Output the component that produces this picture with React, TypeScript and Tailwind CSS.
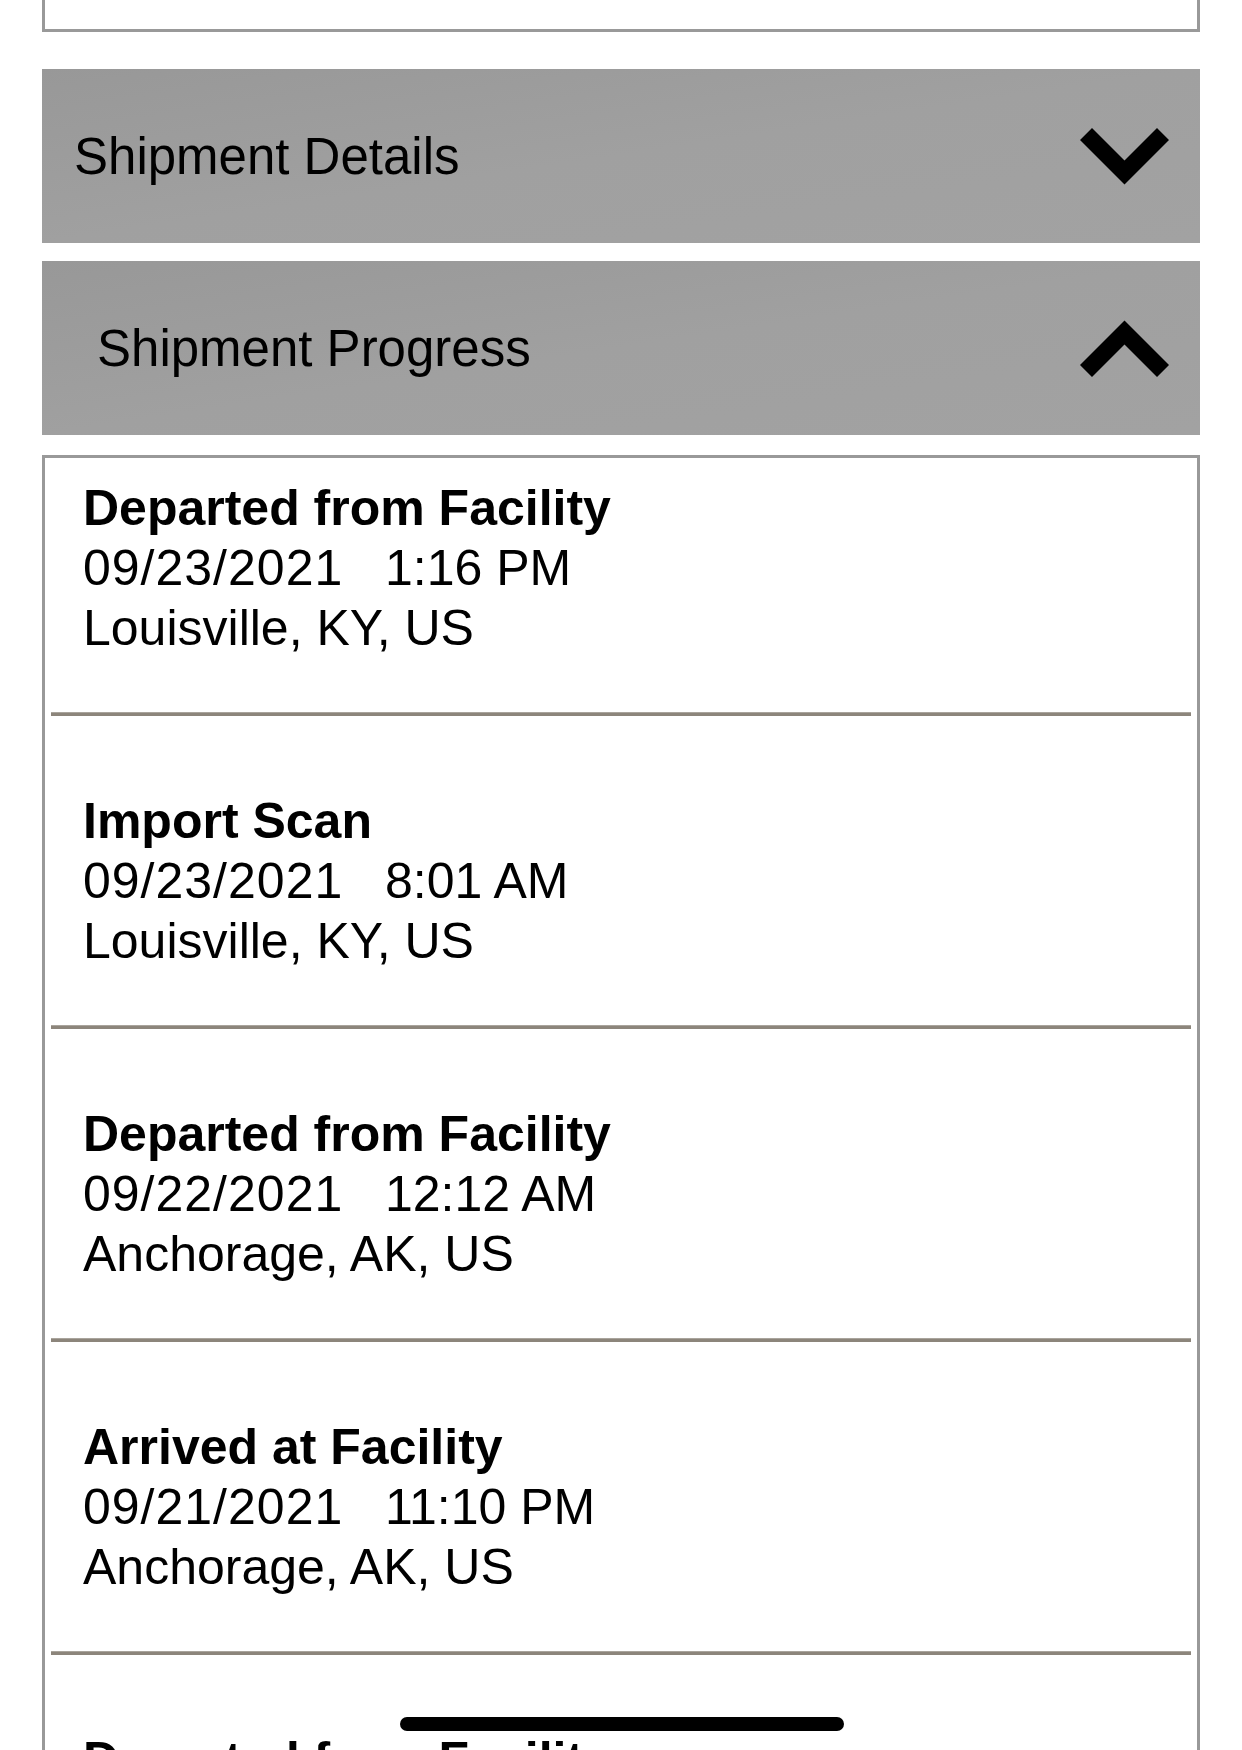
import React from 'react';

type Scan = { status: string; date: string; time: string; place: string };

const SCANS: Scan[] = [
  { status: 'Departed from Facility', date: '09/23/2021', time: '1:16 PM', place: 'Louisville, KY, US' },
  { status: 'Import Scan', date: '09/23/2021', time: '8:01 AM', place: 'Louisville, KY, US' },
  { status: 'Departed from Facility', date: '09/22/2021', time: '12:12 AM', place: 'Anchorage, AK, US' },
  { status: 'Arrived at Facility', date: '09/21/2021', time: '11:10 PM', place: 'Anchorage, AK, US' },
  { status: 'Departed from Facility', date: '09/21/2021', time: '2:45 PM', place: 'Incheon, KR' },
];

// thick chevron, drawn as a filled polygon so the ends stay square
const Chevron = ({ up }: { up?: boolean }) => (
  <svg width="89" height="57" viewBox="0 0 89 57" className={up ? 'rotate-180' : ''}>
    <polygon points="0,12 12,0 44.5,32.5 77,0 89,12 44.5,56.5" fill="#000" />
  </svg>
);

const SectionBar = ({ title, open, className }: { title: string; open?: boolean; className: string }) => (
  <div
    className={`flex h-[174px] items-center justify-between bg-linear-to-br from-[#989898] via-[#a0a0a0] to-[#a2a2a2] pr-[31px] ${className}`}
  >
    <span className="text-[51px] leading-none">{title}</span>
    <Chevron up={open} />
  </div>
);

export default function App() {
  return (
    <div className="relative h-[1750px] w-[1242px] overflow-hidden bg-white font-['Liberation_Sans',Arial,sans-serif] text-black">
      <div className="mx-[42px] flex flex-col">
        {/* bottom of the card above, scrolled mostly out of view */}
        <div className="h-[32px] border-x-[3px] border-b-[3px] border-[#999999] bg-white" />

        <SectionBar title="Shipment Details" className="mt-[37px] pl-[32px]" />
        <SectionBar title="Shipment Progress" open className="mt-[18px] pl-[55px]" />

        <div className="mt-[20px] border-x-[3px] border-t-[3px] border-[#999999]">
          {SCANS.map((s, i) => (
            <div key={i}>
              <div className={`px-[38px] pb-[54px] text-[50px] leading-[60px] ${i === 0 ? 'pt-[20px]' : 'pt-[75px]'}`}>
                <div className="font-bold">{s.status}</div>
                <div className="whitespace-pre">
                  <span className="tracking-[1px]">{s.date}</span>
                  {'   '}
                  {s.time}
                </div>
                <div>{s.place}</div>
              </div>
              <div className="mx-[6px] h-[4px] border-t border-[#a9a49c] bg-[#8c857b]" />
            </div>
          ))}
        </div>
      </div>

      {/* home indicator */}
      <div className="absolute bottom-[19px] left-[400px] h-[14px] w-[444px] rounded-full bg-black" />
    </div>
  );
}
